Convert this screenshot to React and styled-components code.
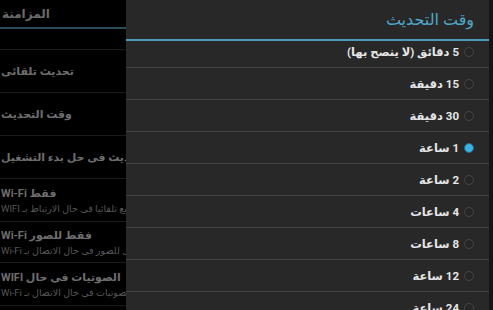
import React from "react";
import styled, { createGlobalStyle } from "styled-components";

const Global = createGlobalStyle`
  html, body {
    margin: 0;
    padding: 0;
    background: #000;
  }
  body {
    font-family: Roboto, "DejaVu Sans", sans-serif;
  }
`;

const Screen = styled.div`
  display: flex;
  width: 493px;
  height: 310px;
  overflow: hidden;
  background: #000;
`;

/* dimmed settings screen behind the dialog */
const Behind = styled.div`
  width: 126px;
  flex-shrink: 0;
  display: flex;
  flex-direction: column;
  overflow: hidden;
`;

const SectionHead = styled.div`
  height: 27px;
  border-bottom: 2px solid #2a4b58;
  display: flex;
  align-items: center;
  padding-left: 2px;
  color: #6a6a6a;
  font-size: 12px;
  font-weight: bold;
`;

const Pref = styled.div`
  height: ${(p) => p.$h}px;
  border-bottom: 1px solid #1b1b1b;
  display: flex;
  flex-direction: column;
  justify-content: center;
  gap: 3px;
`;

const Line = styled.div`
  display: flex;
  padding-left: 1px;
  white-space: nowrap;
  color: ${(p) => (p.$sub ? "#575757" : "#6e6e6e")};
  font-size: ${(p) => (p.$sub ? 9.5 : 11)}px;
  font-weight: ${(p) => (p.$sub ? "normal" : "bold")};
`;

const Txt = styled.span`
  direction: rtl;
  unicode-bidi: isolate;
`;

const Dialog = styled.div`
  width: 363px;
  flex-shrink: 0;
  display: flex;
  flex-direction: column;
  background: #282828;
  direction: rtl;
`;

const Title = styled.div`
  height: 39px;
  border-bottom: 2px solid #4b9ab9;
  display: flex;
  align-items: center;
  padding-right: 15px;
  color: #4fa6c9;
  font-size: 16px;
  position: relative;
  z-index: 1;
  background: #282828;
`;

const List = styled.div`
  flex: 1;
  overflow: hidden;
`;

const Rows = styled.div`
  margin-top: -5px;
`;

const Row = styled.div`
  height: 31px;
  border-bottom: 1px solid #434343;
  display: flex;
  align-items: center;
  gap: 5px;
  padding-right: 15px;
  color: #e6e6e6;
  font-size: 11.5px;
  font-weight: bold;
`;

const Radio = styled.span`
  width: 10px;
  height: 10px;
  border-radius: 50%;
  box-sizing: border-box;
  flex-shrink: 0;
  border: 1px solid ${(p) => (p.$on ? "#2b6580" : "#474747")};
  background: ${(p) => (p.$on ? "#38b3e6" : "#262626")};
`;

const Edge = styled.div`
  flex: 1;
  background: #141414;
`;

const prefs = [
  { h: 20, lines: [] },
  { h: 42, lines: [{ t: "تحديث تلقائى" }] },
  { h: 42, lines: [{ t: "وقت التحديث" }] },
  { h: 42, lines: [{ t: "تحديث فى حل بدء التشغيل" }] },
  {
    h: 42,
    lines: [
      { t: "فقط Wi-Fi" },
      { t: "مزامنة المبيع تلقائيا فى حال الارتباط بـ WIFI", sub: true },
    ],
  },
  {
    h: 40,
    lines: [
      { t: "فقط للصور Wi-Fi" },
      { t: "مزامنة الملفات فى للصور فى حال الاتصال بـ Wi-Fi", sub: true },
    ],
  },
  {
    h: 42,
    lines: [
      { t: "الصوتيات فى حال WIFI" },
      { t: "مزامنة الصوتيات فى حال الاتصال بـ Wi-Fi", sub: true },
    ],
  },
];

const options = [
  "5 دقائق (لا ينصح بها)",
  "15 دقيقة",
  "30 دقيقة",
  "1 ساعة",
  "2 ساعة",
  "4 ساعات",
  "8 ساعات",
  "12 ساعة",
  "24 ساعة",
];

export default function App() {
  return (
    <>
      <Global />
      <Screen>
        <Behind>
          <SectionHead>
            <Txt>المزامنة</Txt>
          </SectionHead>
          {prefs.map((p, i) => (
            <Pref key={i} $h={p.h}>
              {p.lines.map((l, j) => (
                <Line key={j} $sub={l.sub}>
                  <Txt>{l.t}</Txt>
                </Line>
              ))}
            </Pref>
          ))}
        </Behind>
        <Dialog>
          <Title>وقت التحديث</Title>
          <List>
            <Rows>
              {options.map((o) => (
                <Row key={o}>
                  <Radio $on={o === "1 ساعة"} />
                  <span>{o}</span>
                </Row>
              ))}
            </Rows>
          </List>
        </Dialog>
        <Edge />
      </Screen>
    </>
  );
}
